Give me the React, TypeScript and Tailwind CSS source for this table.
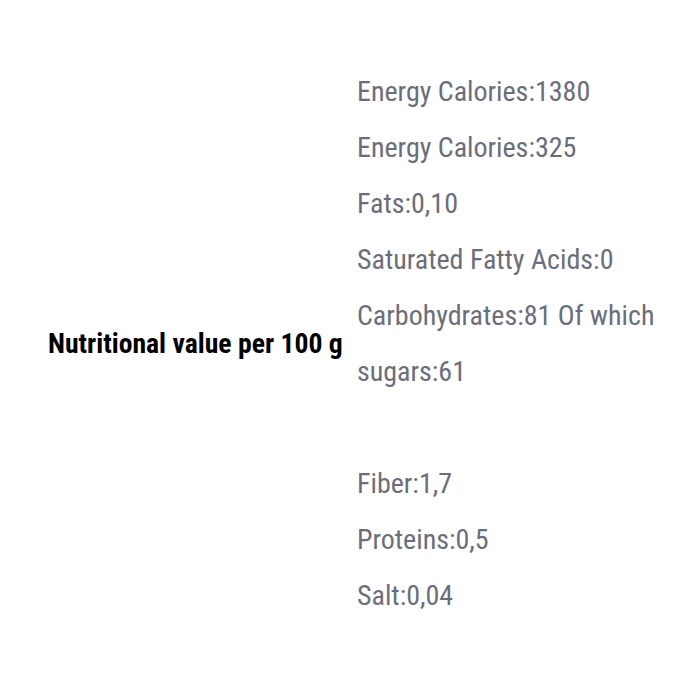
import React from 'react';

const rows = [
  'Energy Calories:1380',
  'Energy Calories:325',
  'Fats:0,10',
  'Saturated Fatty Acids:0',
  'Carbohydrates:81 Of which sugars:61',
  '',
  'Fiber:1,7',
  'Proteins:0,5',
  'Salt:0,04',
];

const App: React.FC = () => {
  return (
    <div
      className="w-[700px] h-[700px] bg-white pt-[64px] pl-[48px]"
      style={{ fontFamily: '"Roboto Condensed", Roboto, sans-serif', fontStretch: 'condensed' }}
    >
      <div className="flex">
        {/* Label */}
        <div className="w-[309px] flex items-center">
          <span className="text-[27.7px] font-bold text-black">Nutritional value per 100 g</span>
        </div>

        {/* Values */}
        <div className="w-[315px] text-[28px] leading-[56px] text-[#6b6e7a]">
          {rows.map((row, i) => (
            <p key={i} className="min-h-[56px]">
              {row}
            </p>
          ))}
        </div>
      </div>
    </div>
  );
};

export default App;
